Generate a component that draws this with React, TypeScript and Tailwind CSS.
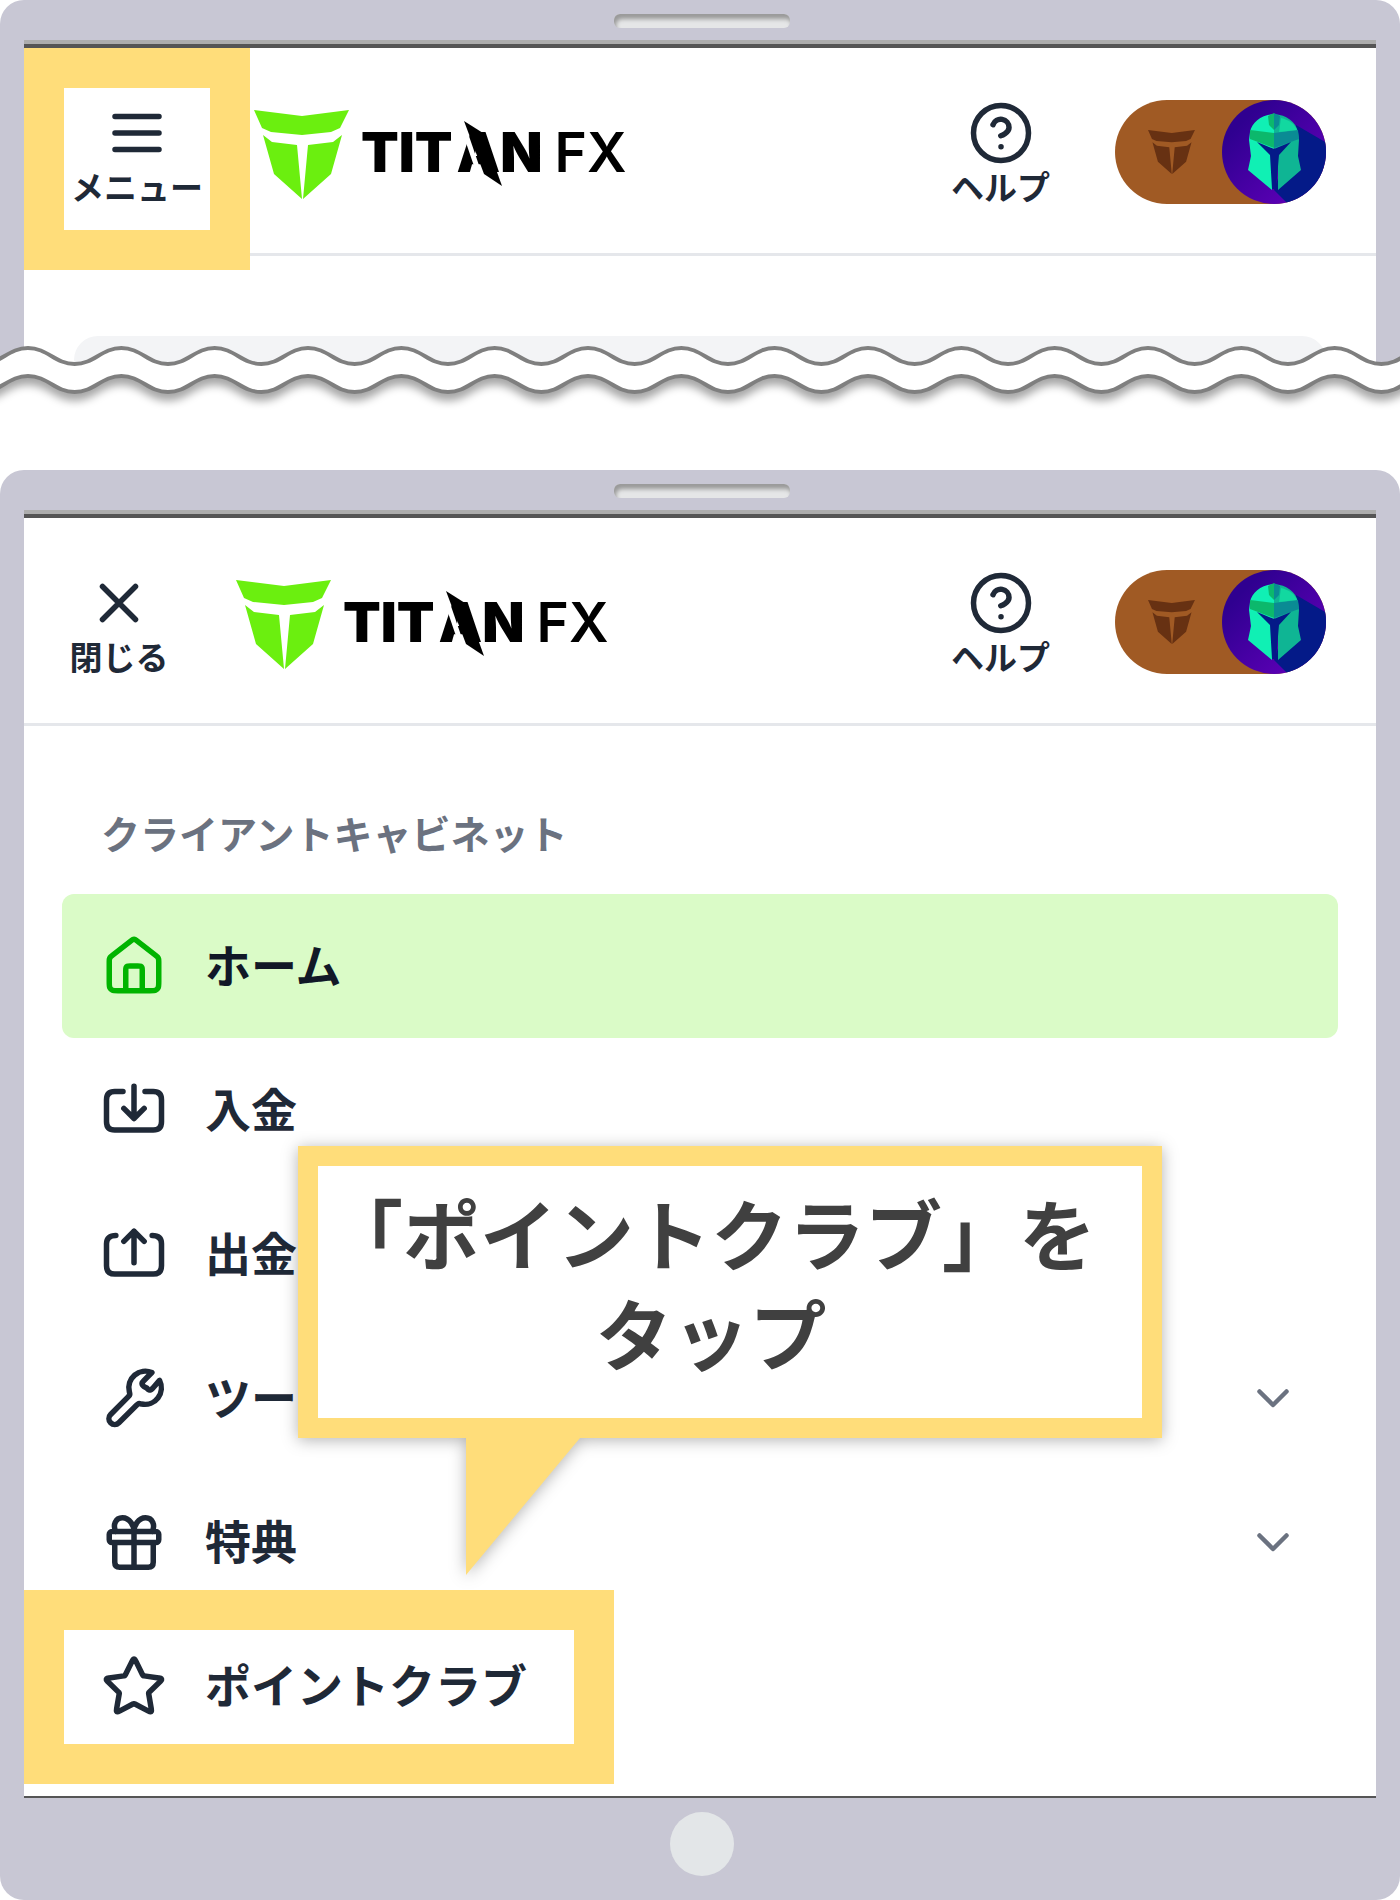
import React from "react";

type IconName = "menu" | "close" | "help" | "home" | "deposit" | "withdraw" | "tools" | "gift" | "star";

const iconPaths: Record<IconName, string> = {
  menu: "M4 6h16M4 12h16M4 18h16",
  close: "M6 6l12 12M18 6L6 18",
  help: "M22 12a10 10 0 1 1-20 0 10 10 0 0 1 20 0zM9.09 9a3 3 0 0 1 5.83 1c0 2-3 3-3 3M12 17h.01",
  home: "M9 21v-7.4c0-.56 0-.84.11-1.05a1 1 0 0 1 .44-.44c.21-.11.49-.11 1.05-.11h2.8c.56 0 .84 0 1.05.11a1 1 0 0 1 .44.44c.11.21.11.49.11 1.05V21M11.02 2.76 4.24 8.04c-.46.35-.69.53-.85.75a2 2 0 0 0-.31.62C3 9.67 3 9.96 3 10.54V17.8c0 1.12 0 1.68.22 2.11a2 2 0 0 0 .87.87c.43.22.99.22 2.11.22h11.6c1.12 0 1.68 0 2.11-.22a2 2 0 0 0 .87-.87c.22-.43.22-.99.22-2.11v-7.26c0-.58 0-.87-.08-1.13a2 2 0 0 0-.31-.62c-.16-.22-.39-.4-.85-.75l-6.78-5.28c-.35-.27-.53-.41-.73-.46a1 1 0 0 0-.5 0c-.2.05-.38.19-.73.46z",
  deposit: "M8 5.3H5C3 5.3 2 6.3 2 8.3v8c0 2 1 3 3 3h14c2 0 3-1 3-3v-8c0-2-1-3-3-3h-3M8.3 11.4 12 15.1l3.7-3.7M12 15.1V3.4",
  withdraw: "M5.4 5.3C3.2 5.3 2 6.3 2 8.3v8c0 2 1 3 3 3h14c2 0 3-1 3-3v-8c0-2-1.2-3-3.4-3M8.3 7.4 12 3.7l3.7 3.7M12 3.7v11.5",
  tools: "M15.63 7.87c-.4-.4-.6-.6-.67-.82a1 1 0 0 1 0-.62c.07-.23.27-.43.67-.82l2.87-2.87A6 6 0 0 0 10.3 9.7c.12.5.18.75.17.9a1 1 0 0 1-.12.43c-.07.14-.21.28-.49.56L3.5 18a2.12 2.12 0 0 0 3 3l6.41-6.36c.28-.28.42-.42.56-.49a1 1 0 0 1 .43-.12c.15-.01.4.05.9.17A6 6 0 0 0 21.3 5.6l-2.41 2.77c-.4.4-.6.6-.82.67a1 1 0 0 1-.62 0c-.23-.07-.43-.27-.82-.67z",
  gift: "M12 8.2v13M5.4 8.2C4.2 6 5.2 3.2 7.8 3.2c2.6 0 4.2 2.8 4.2 5 0-2.2 1.6-5 4.2-5 2.6 0 3.6 2.8 2.4 5M4 8.2h16a1 1 0 0 1 1 1v2a1 1 0 0 1-1 1H4a1 1 0 0 1-1-1v-2a1 1 0 0 1 1-1zM5 12.2v7.2c0 1.2.7 1.8 1.8 1.8h10.4c1.1 0 1.8-.6 1.8-1.8v-7.2",
  star: "M11.28 3.05c.23-.47.35-.7.5-.78a.5.5 0 0 1 .44 0c.15.08.27.31.5.78l2.38 4.83c.07.14.1.21.15.26a.5.5 0 0 0 .16.12c.06.03.14.04.29.06l5.3.77c.51.08.77.11.89.24a.5.5 0 0 1 .13.42c-.02.17-.21.35-.58.71l-3.84 3.75c-.11.11-.17.16-.21.23a.5.5 0 0 0-.06.19c-.01.08 0 .15.03.3l.9 5.28c.09.51.13.77.05.92a.5.5 0 0 1-.36.26c-.17.03-.4-.09-.86-.33l-4.74-2.5c-.13-.07-.2-.11-.27-.12a.5.5 0 0 0-.2 0c-.07.01-.14.05-.27.12l-4.74 2.5c-.46.24-.69.36-.86.33a.5.5 0 0 1-.36-.26c-.08-.15-.04-.41.05-.92l.91-5.28c.02-.15.04-.22.03-.3a.5.5 0 0 0-.06-.19c-.04-.07-.1-.12-.21-.23l-3.84-3.75c-.37-.36-.56-.54-.58-.71a.5.5 0 0 1 .13-.42c.12-.13.38-.16.89-.24l5.3-.77c.15-.02.22-.03.29-.06a.5.5 0 0 0 .16-.12c.05-.05.08-.12.15-.26z",
};

const Icon: React.FC<{ name: IconName; className?: string }> = ({ name, className = "" }) => (
  <svg
    viewBox="0 0 24 24"
    className={`size-[66px] shrink-0 ${className}`}
    fill="none"
    stroke="currentColor"
    strokeWidth="2"
    strokeLinecap="round"
    strokeLinejoin="round"
    aria-hidden="true"
  >
    <path d={iconPaths[name]} />
  </svg>
);

const Shield: React.FC<{ className: string }> = ({ className }) => (
  <svg viewBox="0 0 95 89" className={className} fill="currentColor" aria-hidden="true">
    <path d="M0 0 48 6 95 0 86 18 77 22 48 25 17 22 8 18z" />
    <path d="M9 25 18 32 43 35 48 89 20 64z" />
    <path d="M88 25 79 32 54 35 49 89 77 64z" />
  </svg>
);

const Logo: React.FC = () => (
  <a href="#" className="mt-1 flex items-center text-black">
    <Shield className="h-[89px] w-[95px] text-[#6bef0f]" />
    <span className="ml-3 flex items-center pb-1 font-['Inter',sans-serif] text-[55px] leading-none">
      <span className="font-black">TIT</span>
      <span className="relative ml-1 font-black">
        A
        <svg viewBox="0 0 40 66" className="absolute -top-1 left-1.5 h-[66px] w-10" aria-hidden="true">
          <path d="M3 14 16 52" stroke="#fff" strokeWidth="5" />
          <path d="M1 0 20 12 39 65 21 53z" />
        </svg>
      </span>
      <span className="font-black">N</span>
      <span className="ml-3 font-semibold">FX</span>
    </span>
  </a>
);

const AccountSwitch: React.FC = () => (
  <button aria-label="アカウント" className="flex h-[104px] w-[211px] items-center justify-between rounded-full bg-[#a05a24] pl-[33px]">
    <Shield className="h-[44px] w-[47px] text-[#673112]" />
    <svg viewBox="0 0 104 104" className="size-[104px]" aria-hidden="true">
      <defs>
        <linearGradient id="avatar" x1="0" y1="0" x2="1" y2="1">
          <stop offset="0.2" stopColor="#2f0090" />
          <stop offset="0.8" stopColor="#5a00b4" />
        </linearGradient>
        <clipPath id="round">
          <circle cx="52" cy="52" r="52" />
        </clipPath>
      </defs>
      <g clipPath="url(#round)">
        <path fill="url(#avatar)" d="M0 0h104v104H0z" />
        <path fill="#041a88" d="M74 25 110 46v64H72L52 90z" />
        <path fill="#10f0b4" d="M52 14C39 15 30 22 28 32l-1 8 2 16-3 14 24 20V52l2-4z" />
        <path fill="#0fb594" d="M52 14c13 1 22 8 24 18l1 8-1 16 3 14-23 20V52l-4-4z" />
        <path fill="#0cb86c" d="M28 30l24 3v15L28 39zM46 16l6-3v17l-5-5z" />
        <path fill="#0a8b94" d="M76 30l-24 3v15l25-9zM58 16l-6-3v17l5-5z" />
        <path fill="#12d8a0" d="M59 18c8 2 14 6 16 12l-18 2z" />
        <path fill="#041a88" d="M35 42l17 7 17-7-12 13-3 34h-4l-2-34z" />
      </g>
    </svg>
  </button>
);

interface HeaderProps {
  icon: IconName;
  label: string;
  highlighted?: boolean;
}

const Header: React.FC<HeaderProps> = ({ icon, label, highlighted }) => (
  <header className="flex h-52 items-center border-b-[3px] border-[#e5e7eb] pt-[3px] pr-[50px] pl-10 text-[33px] leading-8 font-bold text-[#1f2937]">
    <button
      className={`relative flex h-[104px] flex-col items-center gap-1 ${highlighted ? "mr-11 w-[146px]" : "mr-[62px] w-[110px]"}`}
    >
      <Icon name={icon} />
      {label}
      {highlighted && (
        <span className="pointer-events-none absolute -top-[52px] -left-10 h-[222px] w-[226px] border-[40px] border-[#ffdd7a]" />
      )}
    </button>
    <Logo />
    <button className="mr-[65px] ml-auto flex h-[104px] flex-col items-center gap-1">
      <Icon name="help" />
      ヘルプ
    </button>
    <AccountSwitch />
  </header>
);

const Speaker: React.FC = () => (
  <div className="flex h-10 justify-center pt-3.5 pl-1">
    <div className="h-3.5 w-44 rounded-md bg-[#e5e6e7] shadow-[inset_2px_5px_4px_#999]" />
  </div>
);

const menuItems: { icon: IconName; label: string; active?: boolean; expandable?: boolean; highlighted?: boolean }[] = [
  { icon: "home", label: "ホーム", active: true },
  { icon: "deposit", label: "入金" },
  { icon: "withdraw", label: "出金" },
  { icon: "tools", label: "ツール", expandable: true },
  { icon: "gift", label: "特典", expandable: true },
  { icon: "star", label: "ポイントクラブ", highlighted: true },
];

const SideMenu: React.FC = () => (
  <nav className="px-[38px] pt-[82px] pb-[38px]">
    <h2 className="pl-[39px] text-[39px] leading-[48px] font-bold text-[#6b7280]">クライアントキャビネット</h2>
    <ul className="mt-[38px]">
      {menuItems.map((item) => (
        <li key={item.label} className="relative">
          <a
            href="#"
            className={`flex h-36 items-center gap-[38px] rounded-xl pr-[45px] pl-[39px] text-[46px] font-bold ${
              item.active ? "bg-[#dafbc7] text-[#111827]" : "text-[#1f2937]"
            }`}
          >
            <Icon name={item.icon} className={item.active ? "text-[#00b400]" : ""} />
            <span className="pb-1.5">{item.label}</span>
            {item.expandable && (
              <svg viewBox="0 0 40 40" className="ml-auto size-10" fill="none" stroke="#6b7280" strokeWidth="4.5" strokeLinecap="round" strokeLinejoin="round" aria-hidden="true">
                <path d="M6.5 13.5 20 27l13.5-13.5" />
              </svg>
            )}
          </a>
          {item.highlighted && (
            <span className="pointer-events-none absolute -top-6 -left-[38px] h-[194px] w-[590px] border-[40px] border-[#ffdd7a]" />
          )}
        </li>
      ))}
    </ul>
  </nav>
);

const Callout: React.FC = () => (
  <div className="absolute top-[632px] right-[214px] left-[274px] drop-shadow-[0_2px_8px_rgba(0,0,0,0.3)]">
    <p className="h-[292px] border-[20px] border-[#ffdd7a] bg-white pt-4 pr-[38px] text-center text-[77px] leading-[100px] font-bold text-[#404040]">
      「ポイントクラブ」を
      <br />
      タップ
    </p>
    <svg viewBox="0 0 114 137" className="ml-[168px] h-[137px] w-[114px]" aria-hidden="true">
      <path d="M0 0h114L0 137z" fill="#ffdd7a" />
    </svg>
  </div>
);

const HALF = 1400 / 30;
const xs = Array.from({ length: 34 }, (_, i) => 28 + (i - 2) * HALF);

// even points are crests, odd points are troughs
const segments = (points: number[], crest: number, startsOnCrest: boolean) =>
  points
    .slice(1)
    .map((x, i) => {
      const prev = points[i];
      const fromCrest = i % 2 === 0 ? startsOnCrest : !startsOnCrest;
      const from = fromCrest ? crest : crest + 16;
      const to = fromCrest ? crest + 16 : crest;
      const bend = (x - prev) * 0.42;
      return `C${prev + bend} ${from} ${x - bend} ${to} ${x} ${to}`;
    })
    .join("");

const wave = (crest: number) => `M${xs[0]} ${crest}${segments(xs, crest, true)}`;
const band = `${wave(8)}V52${segments([...xs].reverse(), 36, false)}Z`;

const TornEdge: React.FC = () => (
  <svg viewBox="0 0 1400 80" preserveAspectRatio="none" className="absolute inset-x-0 top-[340px] h-20 w-full" fill="none" aria-hidden="true">
    <path d={band} fill="#fff" className="drop-shadow-[0_9px_4px_rgba(0,0,0,0.35)]" />
    <path d={wave(8)} stroke="#7f7f7f" strokeWidth="4" />
    <path d={wave(36)} stroke="#7f7f7f" strokeWidth="4" />
  </svg>
);

const App: React.FC = () => (
  <main className="bg-white font-['Noto_Sans_CJK_JP',sans-serif]">
    <section className="relative h-[470px]">
      <div className="h-[370px] rounded-t-3xl bg-[#c8c7d4] px-6">
        <Speaker />
        <div className="flex h-[330px] flex-col border-t-4 border-[#adadad] bg-white">
          <div className="h-1 shrink-0 bg-[#555]" />
          <Header icon="menu" label="メニュー" highlighted />
          <div className="mx-[50px] mt-20 grow rounded-t-3xl bg-[#f3f4f6]" />
        </div>
      </div>
      <TornEdge />
    </section>

    <section className="rounded-3xl bg-[#c8c7d4] px-6">
      <Speaker />
      <div className="relative border-t-4 border-b-2 border-t-[#adadad] border-b-[#555] bg-white">
        <div className="h-1 bg-[#555]" />
        <Header icon="close" label="閉じる" />
        <SideMenu />
        <Callout />
      </div>
      <div className="flex h-[102px] justify-center pt-[14px] pl-1">
        <button aria-label="ホームボタン" className="size-16 rounded-full bg-[#e3e6e8]" />
      </div>
    </section>
  </main>
);

export default App;
